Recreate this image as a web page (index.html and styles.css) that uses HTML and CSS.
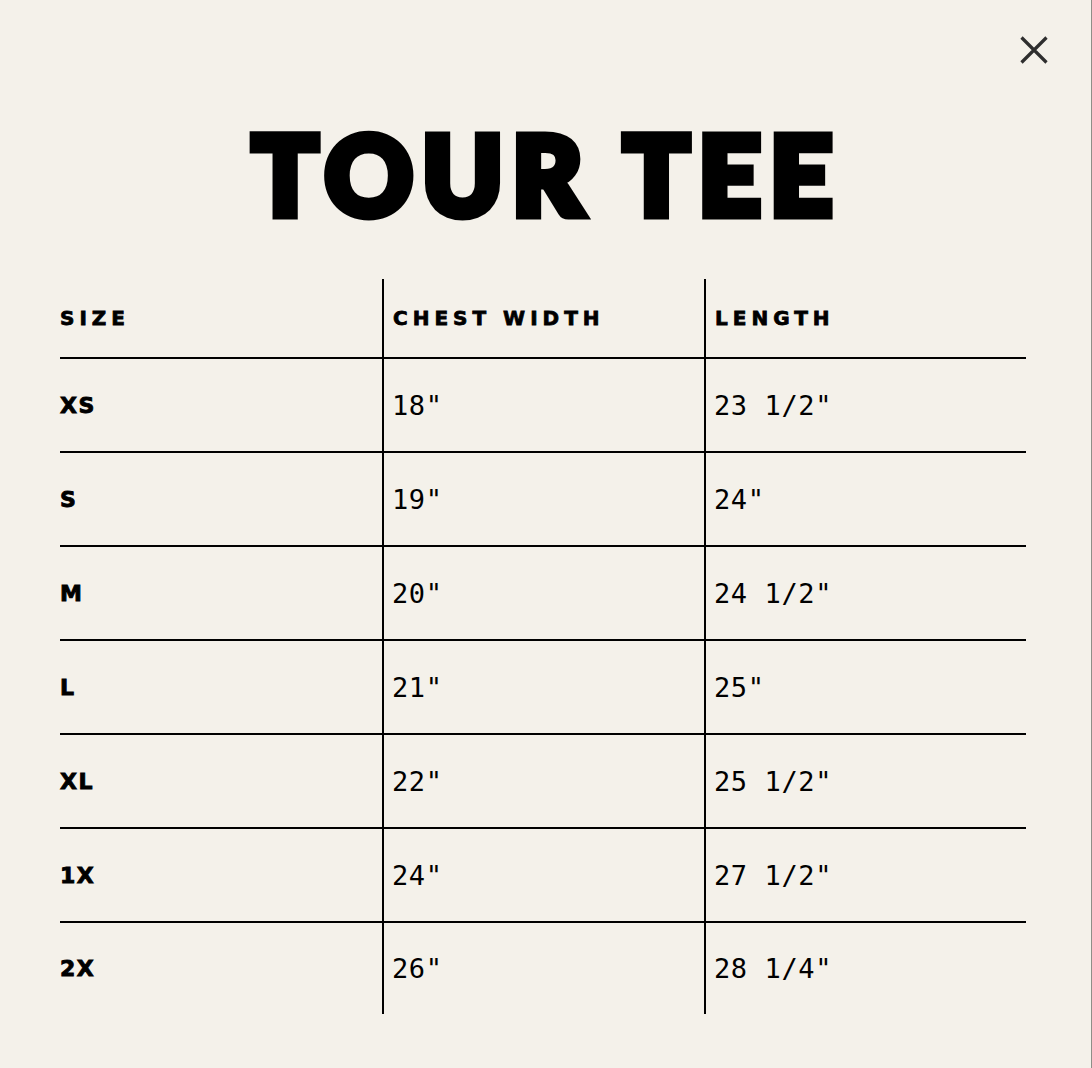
FILE: index.html
```html
<!DOCTYPE html>
<html lang="en">
<head>
<meta charset="utf-8">
<title>Tour Tee – Size Chart</title>
<link rel="stylesheet" href="styles.css">
</head>
<body>
<div class="modal">
  <button class="close" aria-label="Close">
    <svg width="28" height="28" viewBox="0 0 28 28" aria-hidden="true">
      <path d="M1.5 1.5 L26.5 26.5 M26.5 1.5 L1.5 26.5" stroke="#2e2e2e" stroke-width="3.2" fill="none"/>
    </svg>
  </button>
  <h1 class="title">TOUR TEE</h1>
  <table class="size-table">
    <thead>
      <tr>
        <th>SIZE</th>
        <th>CHEST WIDTH</th>
        <th>LENGTH</th>
      </tr>
    </thead>
    <tbody>
      <tr><td class="size">XS</td><td>18"</td><td>23 1/2"</td></tr>
      <tr><td class="size">S</td><td>19"</td><td>24"</td></tr>
      <tr><td class="size">M</td><td>20"</td><td>24 1/2"</td></tr>
      <tr><td class="size">L</td><td>21"</td><td>25"</td></tr>
      <tr><td class="size">XL</td><td>22"</td><td>25 1/2"</td></tr>
      <tr><td class="size">1X</td><td>24"</td><td>27 1/2"</td></tr>
      <tr><td class="size">2X</td><td>26"</td><td>28 1/4"</td></tr>
    </tbody>
  </table>
</div>
</body>
</html>
```

FILE: styles.css
```css
html, body {
  margin: 0;
  padding: 0;
  background: #f4f1ea;
}

.modal {
  position: relative;
  box-sizing: border-box;
  width: 100%;
  min-height: 1068px;
  padding: 119px 66px 0 60px;
  border-right: 1px solid #8e8e88;
  color: #000;
}

.close {
  position: absolute;
  top: 36px;
  right: 43px;
  width: 28px;
  height: 28px;
  padding: 0;
  border: 0;
  background: none;
  cursor: pointer;
}

.close svg {
  display: block;
}

.title {
  margin: 0 0 52px;
  padding-left: 9px;
  font-family: Lato, "DejaVu Sans", sans-serif;
  font-weight: 900;
  font-size: 108px;
  line-height: 108px;
  height: 108px;
  text-align: center;
  letter-spacing: 9.5px;
  -webkit-text-stroke: 9px #000;
  paint-order: stroke fill;
}

.size-table {
  width: 966px;
  table-layout: fixed;
  border-collapse: separate;
  border-spacing: 0;
}

.size-table th,
.size-table td {
  box-sizing: border-box;
  width: 322px;
  padding: 0 0 0 8px;
  text-align: left;
  vertical-align: middle;
}

.size-table th:first-child,
.size-table td:first-child {
  padding-left: 0;
}

.size-table th + th,
.size-table td + td {
  border-left: 2px solid #000;
}

.size-table th {
  height: 80px;
  border-bottom: 2px solid #000;
  font-family: "DejaVu Sans", sans-serif;
  font-weight: 700;
  font-size: 20px;
  letter-spacing: 5px;
  -webkit-text-stroke: 0.8px #000;
}

.size-table th + th {
  padding-left: 9px;
}

.size-table td {
  height: 94px;
  border-bottom: 2px solid #000;
  font-family: "DejaVu Sans Mono", monospace;
  font-size: 27px;
  letter-spacing: 0.6px;
  white-space: pre;
}

.size-table tbody tr:last-child td {
  height: 91px;
  border-bottom: 0;
}

.size-table td.size {
  font-family: "DejaVu Sans", sans-serif;
  font-weight: 700;
  font-size: 22px;
  letter-spacing: 1.5px;
  -webkit-text-stroke: 0.9px #000;
}
```
